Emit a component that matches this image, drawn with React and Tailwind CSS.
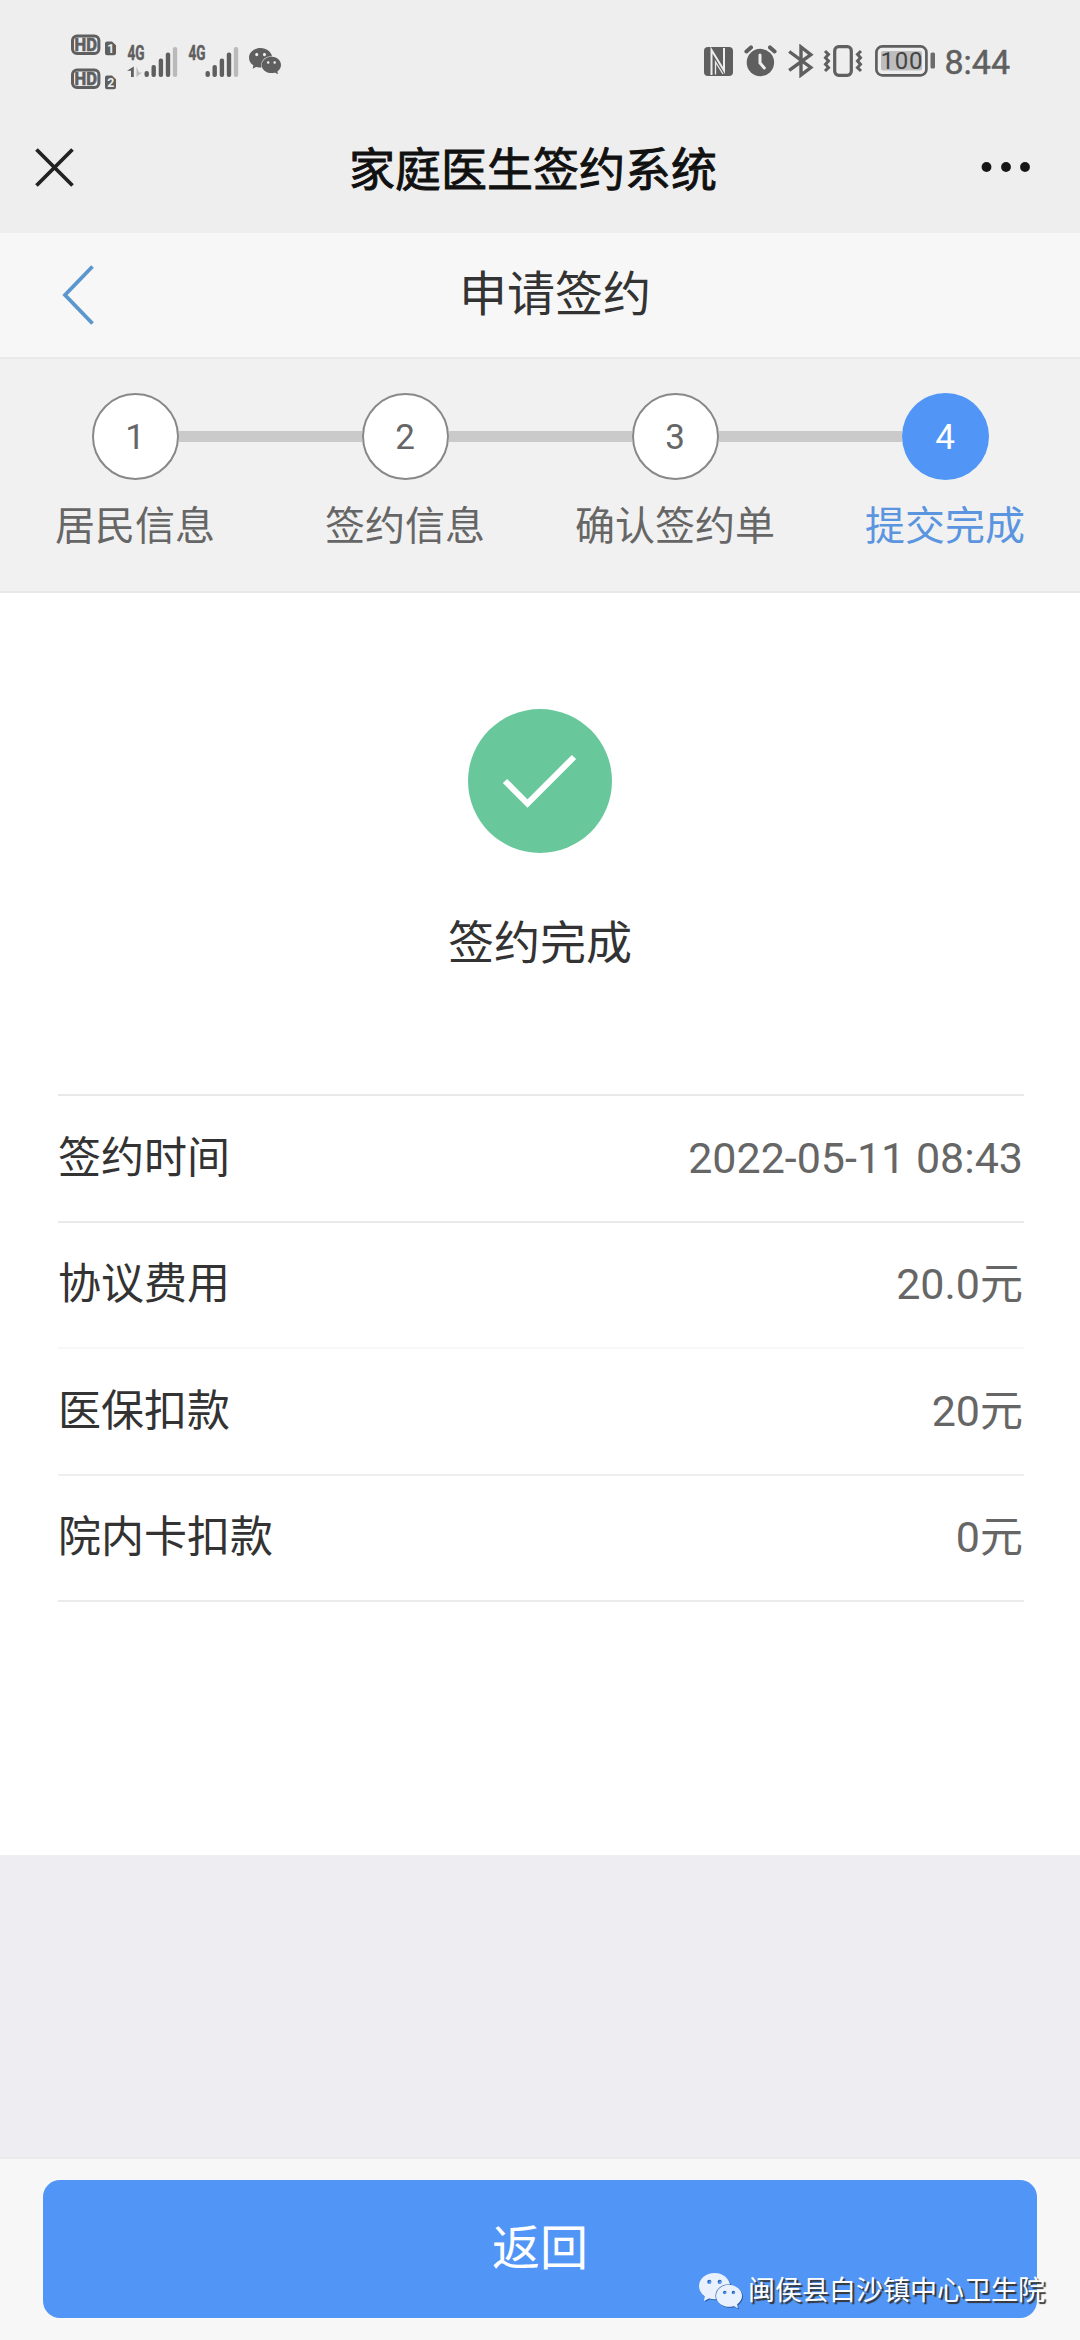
import { SiWechat } from "react-icons/si";

const steps = ["居民信息", "签约信息", "确认签约单", "提交完成"];

const details = [
  { label: "签约时间", value: "2022-05-11 08:43", line: "border-[#eaeaea]" },
  { label: "协议费用", value: "20.0元", line: "border-[#f7f7f7]" },
  { label: "医保扣款", value: "20元", line: "border-[#efefef]" },
  { label: "院内卡扣款", value: "0元", line: "border-[#ebebeb]" },
];

/* ---------------- STATUS BAR ICONS ---------------- */
const HdBadge = ({ sim }) => (
  <svg width="46" height="24" viewBox="0 0 46 24" fill="#5f5f5f">
    <rect x="1.5" y="3" width="26.4" height="17.6" rx="4.5" fill="none" stroke="#5f5f5f" strokeWidth="3" />
    <text
      x="3.6"
      y="18"
      fontSize="17.5"
      fontWeight="700"
      stroke="#5f5f5f"
      strokeWidth="0.7"
      textLength="22.4"
      lengthAdjust="spacingAndGlyphs"
    >
      HD
    </text>
    <path d="M36 8.5h5l4 3.800v8a2 2 0 0 1-2 2h-7a2 2 0 0 1-2-2v-9.800a2 2 0 0 1 2-2z" />
    <text x="36.2" y="20" fontSize="13" fontWeight="700" fill="#eee" textLength="7" lengthAdjust="spacingAndGlyphs">
      {sim}
    </text>
  </svg>
);

const bars = [
  { x: 17.5, y: 29 },
  { x: 24.5, y: 23 },
  { x: 31.7, y: 16.5 },
  { x: 38.8, y: 10.5 },
  { x: 45.8, y: 5 },
];

const Signal = ({ data }) => (
  <svg width="52" height="38" viewBox="0 0 52 38" fill="#5f5f5f">
    <text
      x="0.5"
      y="18.4"
      fontSize="19.5"
      fontWeight="700"
      stroke="#5f5f5f"
      strokeWidth="0.5"
      textLength="17"
      lengthAdjust="spacingAndGlyphs"
    >
      4G
    </text>
    {data && (
      <>
        <path d="M6.8 24.5V35H4v-6.300H0z" />
        <path d="M9.5 24.5V35l5.500-4.600h-3z" fill="#bbb" />
      </>
    )}
    {bars.map((bar, i) => (
      <rect key={bar.x} x={bar.x} y={bar.y} width="4.4" height={35 - bar.y} rx="2" fill={i === 4 ? "#bababa" : "#5f5f5f"} />
    ))}
  </svg>
);

const NfcIcon = () => (
  <svg width="29" height="29" viewBox="0 0 29 29" fill="none" stroke="#eee">
    <rect width="29" height="29" rx="4" fill="#5f5f5f" stroke="none" />
    <path d="M7.5 28V3l12.500 20.500V1" strokeWidth="2" />
    <path d="M11.500 27.500V15l7.500 12" strokeWidth="1.300" />
  </svg>
);

const AlarmIcon = () => (
  <svg width="33" height="32" viewBox="0 0 33 32" fill="none" strokeLinecap="round">
    <circle cx="16.4" cy="17.5" r="13.7" fill="#5f5f5f" />
    <path d="M2.4 6.5 7 2.4M30.6 6.5 26 2.4" stroke="#5f5f5f" strokeWidth="4" />
    <path d="M16 10v8l4.3 5" stroke="#eee" strokeWidth="3" />
  </svg>
);

const BluetoothIcon = () => (
  <svg width="26" height="34" viewBox="0 0 26 34" fill="none" stroke="#5f5f5f" strokeWidth="3.4">
    <path d="M1.2 7.5 22.8 23.5 13 31V3l9.8 7.6L1.2 26.4" />
  </svg>
);

const VibrateIcon = () => (
  <svg width="40" height="32" viewBox="0 0 40 32" fill="none" stroke="#5f5f5f" strokeWidth="3.2">
    <rect x="11.7" y="1.7" width="16.6" height="28.6" rx="4" />
    <path d="m2 6 3.5 3.3-3 3.4 3 3.3-3 3.3 3 3.3L2 26M38 6l-3.5 3.3 3 3.4-3 3.3 3 3.3-3 3.3L38 26" strokeWidth="3" />
  </svg>
);

const BatteryIcon = () => (
  <svg width="61" height="32" viewBox="0 0 61 32">
    <rect x="1.4" y="1.4" width="50" height="29" rx="6" fill="none" stroke="#5f5f5f" strokeWidth="2.7" />
    <rect x="6" y="6" width="41" height="19.5" rx="2" fill="#bdbdbd" />
    <text x="5.5" y="24" fontSize="24" fill="#444" textLength="42" lengthAdjust="spacing">
      100
    </text>
    <rect x="55.5" y="7.5" width="4.5" height="16" rx="1.5" fill="#6c6c6c" />
  </svg>
);

const StatusBar = () => (
  <div className="flex h-[122px] items-center justify-between pl-[71px] pr-[70px]">
    <div className="flex items-center">
      <div className="flex flex-col gap-[10px] pt-[1px]">
        <HdBadge sim="1" />
        <HdBadge sim="2" />
      </div>
      <div className="ml-[10px] flex gap-[9px]">
        <Signal data />
        <Signal />
      </div>
      <SiWechat className="ml-[9px] h-[32px] w-[32px] text-[#5f5f5f]" />
    </div>
    <div className="flex items-center">
      <NfcIcon />
      <span className="ml-[11px]"><AlarmIcon /></span>
      <span className="ml-[11px]"><BluetoothIcon /></span>
      <span className="ml-[9px]"><VibrateIcon /></span>
      <span className="ml-[12px]"><BatteryIcon /></span>
      <span className="ml-[8px] pt-[2px] text-[34px] leading-none text-[#5f5f5f] [-webkit-text-stroke:0.5px]">8:44</span>
    </div>
  </div>
);

/* ---------------- STEPS ---------------- */
const Steps = () => (
  <div className="grid h-[234px] grid-cols-4 border-b-2 border-[#e8e8e8] bg-[#f1f1f1] pt-[34px]">
    {steps.map((step, i) => {
      const active = i === steps.length - 1;
      return (
        <div key={step}>
          <div className="flex items-center">
            <div className={`h-[11px] flex-1 ${i > 0 ? "bg-[#cacaca]" : ""}`} />
            <div
              className={`flex h-[87px] w-[87px] items-center justify-center rounded-full pt-[4px] text-[35px] ${
                active ? "bg-[#5196f7] text-white" : "border-2 border-[#888] bg-white text-[#666]"
              }`}
            >
              {i + 1}
            </div>
            <div className={`h-[11px] flex-1 ${active ? "" : "bg-[#cacaca]"}`} />
          </div>
          <p className={`mt-[17px] text-center text-[40px] leading-[60px] ${active ? "text-[#5b95e0]" : "text-[#666]"}`}>
            {step}
          </p>
        </div>
      );
    })}
  </div>
);

const App = () => {
  return (
    <div className="relative flex h-[2340px] w-[1080px] flex-col overflow-hidden bg-[#eeedf2] font-[Roboto,'Noto_Sans_CJK_SC',sans-serif] text-[#333]">
      <header className="h-[233px] bg-[#eeeeee]">
        <StatusBar />
        <div className="flex h-[90px] items-center justify-between pl-[34px] pr-[49px]">
          <svg width="41" height="41" viewBox="0 0 41 41" stroke="#222" strokeWidth="3.8">
            <path d="m2.500 2.500 36 36M38.500 2.500l-36 36" />
          </svg>
          <h1 className="pl-[10px] pt-[5px] text-[46px] leading-none text-[#111] [-webkit-text-stroke:0.9px]">家庭医生签约系统</h1>
          <svg width="50" height="12" viewBox="0 0 50 12" fill="#161616">
            <circle cx="5.5" cy="6" r="4.9" />
            <circle cx="25" cy="6" r="4.9" />
            <circle cx="44" cy="6" r="4.9" />
          </svg>
        </div>
      </header>

      {/* PAGE TITLE */}
      <nav className="flex h-[126px] items-center border-b-2 border-[#e9e9e9] bg-[#f7f7f7] pl-[61px]">
        <svg width="34" height="62" viewBox="0 0 34 62" fill="none" stroke="#5b97cf" strokeWidth="3.8">
          <path d="M31.500 2.500 4 31l27.500 28.500" />
        </svg>
        <h2 className="flex-1 pr-[65px] text-center text-[48px] leading-none">申请签约</h2>
      </nav>

      <Steps />

      {/* RESULT */}
      <main className="h-[1262px] bg-white pl-[58px] pr-[56px] pt-[116px]">
        <div className="flex flex-col items-center pr-[2px]">
          <svg width="144" height="144" viewBox="0 0 144 144" fill="none">
            <circle cx="72" cy="72" r="72" fill="#68c79b" />
            <path d="m37 72 22.500 22.500L106 48" stroke="#fff" strokeWidth="6" />
          </svg>
          <p className="mt-[55px] text-[46px] leading-[70px]">签约完成</p>
        </div>
        <ul className="mt-[116px] border-t-2 border-[#e9e9e9]">
          {details.map((item) => (
            <li
              key={item.label}
              className={`flex h-[126.5px] items-center justify-between border-b-2 pb-[1px] pr-[1px] text-[43px] ${item.line}`}
            >
              <span>{item.label}</span>
              <span className="text-[#666]">{item.value}</span>
            </li>
          ))}
        </ul>
      </main>

      {/* FOOTER */}
      <footer className="mt-auto h-[183px] border-t-2 border-[#e9e9ec] bg-[#f7f7f7] px-[43px] pt-[21px]">
        <button className="h-[138px] w-full rounded-[17px] bg-[#5196f7] text-[48px] text-white">返回</button>
      </footer>

      {/* WATERMARK */}
      <div className="absolute bottom-[28px] right-[35px] flex items-center gap-[6px] text-[27px] leading-[42px] text-white [text-shadow:2px_2px_1px_#333]">
        <SiWechat className="h-[43px] w-[43px] text-[#e9f1ff] drop-shadow-[1px_1px_0_#2c5fa8]" />
        <span>闽侯县白沙镇中心卫生院</span>
      </div>
    </div>
  );
};

export default App;
